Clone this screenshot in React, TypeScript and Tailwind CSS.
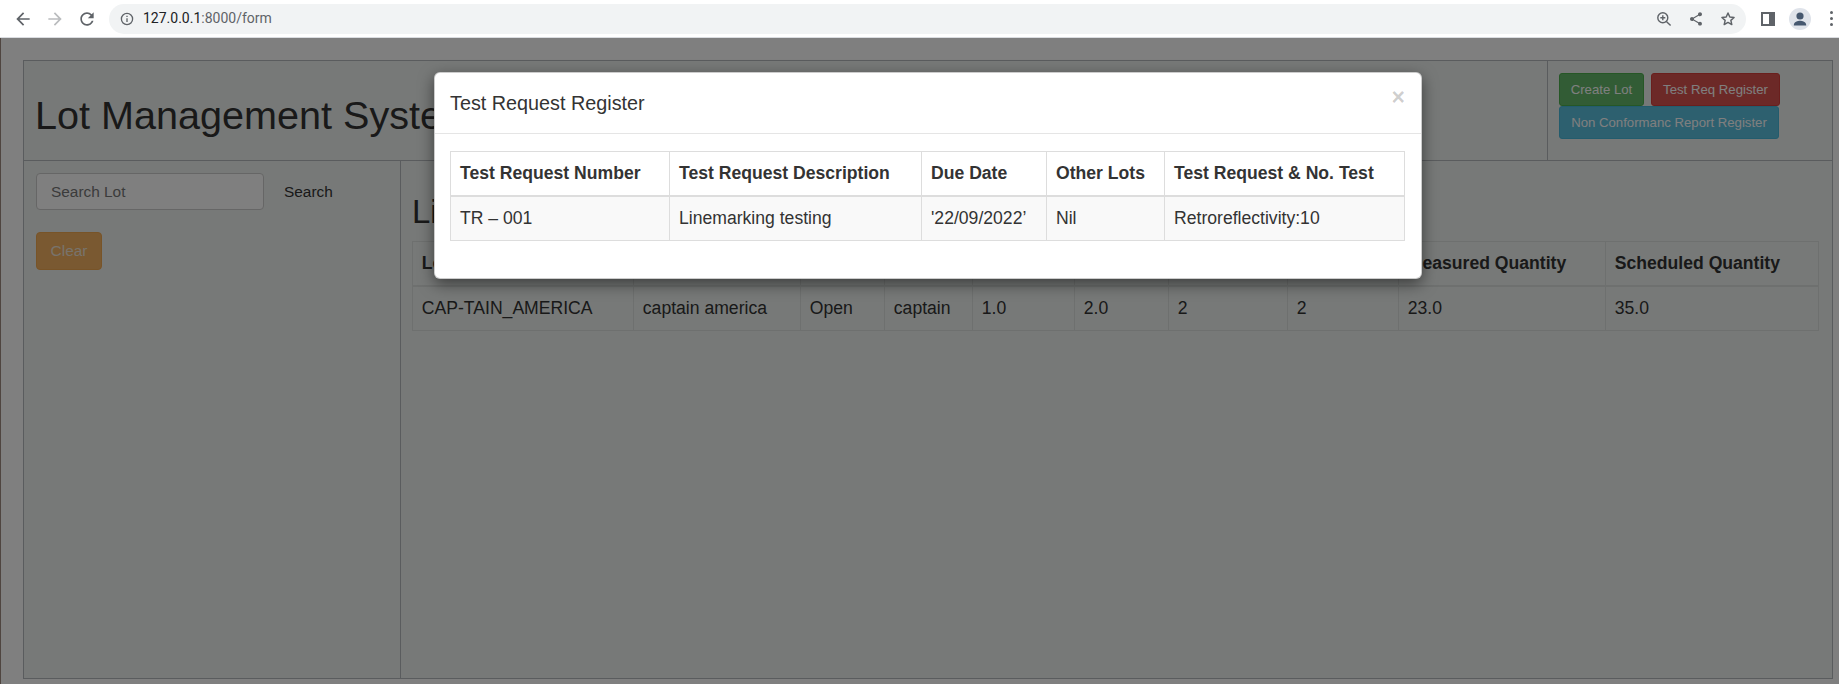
const FONT = { fontFamily: '"Liberation Sans", Arial, sans-serif' };

function Glyph({ d, className, fill = "#5f6368" }: { d: string; className: string; fill?: string }) {
  return (
    <svg viewBox="0 0 24 24" className={className} fill={fill}>
      <path d={d} />
    </svg>
  );
}

const ARROW = "M20 11H7.83l5.59-5.59L12 4l-8 8 8 8 1.41-1.41L7.83 13H20v-2z";
const RELOAD =
  "M17.65 6.35C16.2 4.9 14.21 4 12 4c-4.42 0-7.99 3.58-7.99 8s3.57 8 7.99 8c3.73 0 6.84-2.55 7.73-6h-2.08c-.82 2.33-3.04 4-5.65 4-3.31 0-6-2.69-6-6s2.69-6 6-6c1.66 0 3.14.69 4.22 1.78L13 11h7V4l-2.35 2.35z";
const SHARE =
  "M18 16.08c-.76 0-1.44.3-1.96.77L8.91 12.7c.05-.23.09-.46.09-.7s-.04-.47-.09-.7l7.05-4.11c.54.5 1.25.81 2.04.81 1.66 0 3-1.34 3-3s-1.34-3-3-3-3 1.34-3 3c0 .24.04.47.09.7L8.04 9.81C7.5 9.31 6.79 9 6 9c-1.66 0-3 1.34-3 3s1.34 3 3 3c.79 0 1.5-.31 2.04-.81l7.12 4.16c-.05.21-.08.43-.08.65 0 1.61 1.31 2.92 2.92 2.92 1.61 0 2.92-1.31 2.92-2.92s-1.31-2.92-2.92-2.92z";

function BrowserBar() {
  return (
    <div className="h-[38px] shrink-0 bg-white border-b border-[#dadce0] flex items-center pl-[13px] pr-0">
      <Glyph d={ARROW} className="w-5 h-5 shrink-0" />
      <Glyph d={ARROW} fill="#babcbe" className="w-5 h-5 shrink-0 ml-[12px] rotate-180" />
      <Glyph d={RELOAD} className="w-5 h-5 shrink-0 ml-[12px]" />
      <div className="ml-[12px] w-[1637px] h-[30px] rounded-full bg-[#f1f3f4] flex items-center pl-[11px] pr-[10px]">
        <svg viewBox="0 0 16 16" className="w-[14px] h-[14px] shrink-0" fill="none" stroke="#5f6368" strokeWidth="1.5">
          <circle cx="8" cy="8" r="6.4" />
          <path d="M8 7v4.4M8 4.4v1.4" />
        </svg>
        <span className="ml-[9px] text-[14px] text-[#202124]" style={{ fontFamily: 'Roboto, "Noto Sans", sans-serif' }}>
          127.0.0.1<span className="text-[#5f6368]">:8000/form</span>
        </span>
        <div className="ml-auto flex items-center gap-[16px]">
          <svg viewBox="0 0 16 16" className="w-[16px] h-[16px]" fill="none" stroke="#5f6368" strokeWidth="1.4">
            <circle cx="6.8" cy="6.8" r="5" />
            <path d="M10.4 10.4l4.2 4.2M6.8 4.3v5M4.3 6.8h5" />
          </svg>
          <Glyph d={SHARE} className="w-[16px] h-[16px]" />
          <svg viewBox="0 0 24 24" className="w-[16px] h-[16px]" fill="none" stroke="#5f6368" strokeWidth="2.2" strokeLinejoin="round">
            <path d="M12 3l2.7 6 6.4.7-4.8 4.3 1.4 6.4L12 17.1l-5.7 3.3 1.4-6.4-4.8-4.3 6.4-.7z" />
          </svg>
        </div>
      </div>
      <div className="ml-[15px] w-[14px] h-[14px] shrink-0 border-2 border-[#5f6368] border-r-[6px]" />
      <div className="ml-[14px] w-[22px] h-[22px] shrink-0 rounded-full bg-[#dfe3ea] overflow-hidden">
        <svg viewBox="0 0 22 22" className="w-full h-full" fill="#46586f">
          <circle cx="11" cy="8" r="3.6" />
          <path d="M4.8 17c0-2.9 4-4.2 6.2-4.2s6.2 1.3 6.2 4.2v.6H4.8z" />
        </svg>
      </div>
      <div className="ml-[19px] w-[3px] flex flex-col gap-[3px] shrink-0">
        <span className="w-[3px] h-[3px] rounded-full bg-[#5f6368]" />
        <span className="w-[3px] h-[3px] rounded-full bg-[#5f6368]" />
        <span className="w-[3px] h-[3px] rounded-full bg-[#5f6368]" />
      </div>
    </div>
  );
}

function LotTable() {
  return (
    <table className="table-fixed border-collapse w-[1407px] text-[17.6px] text-[#333]">
      <thead>
        <tr className="h-[44px] text-left">
          <th className="w-[221px] border border-[#dde0de] px-[8.8px] font-bold">Lot</th>
          <th className="w-[167px] border border-[#dde0de]"></th>
          <th className="w-[84px] border border-[#dde0de]"></th>
          <th className="w-[88px] border border-[#dde0de]"></th>
          <th className="w-[102px] border border-[#dde0de]"></th>
          <th className="w-[94px] border border-[#dde0de]"></th>
          <th className="w-[119px] border border-[#dde0de]"></th>
          <th className="w-[111px] border border-[#dde0de]"></th>
          <th className="w-[207px] border border-[#dde0de] px-[8.8px] font-bold whitespace-nowrap">Measured Quantity</th>
          <th className="border border-[#dde0de] px-[8.8px] font-bold whitespace-nowrap">Scheduled Quantity</th>
        </tr>
      </thead>
      <tbody>
        <tr className="h-[45px] border-t-2 border-[#dde0de]">
          <td className="border border-[#dde0de] px-[8.8px]">CAP-TAIN_AMERICA</td>
          <td className="border border-[#dde0de] px-[8.8px]">captain america</td>
          <td className="border border-[#dde0de] px-[8.8px]">Open</td>
          <td className="border border-[#dde0de] px-[8.8px]">captain</td>
          <td className="border border-[#dde0de] px-[8.8px]">1.0</td>
          <td className="border border-[#dde0de] px-[8.8px]">2.0</td>
          <td className="border border-[#dde0de] px-[8.8px]">2</td>
          <td className="border border-[#dde0de] px-[8.8px]">2</td>
          <td className="border border-[#dde0de] px-[8.8px]">23.0</td>
          <td className="border border-[#dde0de] px-[8.8px]">35.0</td>
        </tr>
      </tbody>
    </table>
  );
}

function Modal() {
  return (
    <div className="absolute inset-0 bg-black/50">
      <div className="mt-[34px] ml-[433px] w-[988px] h-[207px] bg-white rounded-[6px] border border-black/20 shadow-[0_5px_15px_rgba(0,0,0,0.5)]">
        <div className="h-[61px] border-b border-[#e5e5e5] flex items-start justify-between pl-[15px] pr-[16px]">
          <h4 className="mt-[17px] text-[19.8px] leading-[26px] text-[#333]">Test Request Register</h4>
          <span className="mt-[8px] text-[23px] font-bold leading-[32px] text-black/20">×</span>
        </div>
        <div className="pl-[15px] pt-[17px]">
          <table className="table-fixed border-collapse w-[955px] text-[17.6px] text-[#333]">
            <thead>
              <tr className="h-[44px] text-left">
                <th className="w-[219px] border border-[#ddd] px-[9px] font-bold whitespace-nowrap">Test Request Number</th>
                <th className="w-[252px] border border-[#ddd] px-[9px] font-bold whitespace-nowrap">Test Request Description</th>
                <th className="w-[125px] border border-[#ddd] px-[9px] font-bold whitespace-nowrap">Due Date</th>
                <th className="w-[118px] border border-[#ddd] px-[9px] font-bold whitespace-nowrap">Other Lots</th>
                <th className="border border-[#ddd] px-[9px] font-bold whitespace-nowrap">Test Request &amp; No. Test</th>
              </tr>
            </thead>
            <tbody>
              <tr className="h-[45px] bg-[#f9f9f9] border-t-2 border-[#ddd]">
                <td className="border border-[#ddd] px-[9px]">TR – 001</td>
                <td className="border border-[#ddd] px-[9px]">Linemarking testing</td>
                <td className="border border-[#ddd] px-[9px]">'22/09/2022’</td>
                <td className="border border-[#ddd] px-[9px]">Nil</td>
                <td className="border border-[#ddd] px-[9px]">Retroreflectivity:10</td>
              </tr>
            </tbody>
          </table>
        </div>
      </div>
    </div>
  );
}

export default function App() {
  return (
    <div className="h-[684px] w-[1839px] overflow-hidden flex flex-col bg-white" style={FONT}>
      <BrowserBar />
      <div className="relative flex-1 min-h-0 bg-white border-l border-[#4f4540] pt-[22px] pl-[22px]">
        <div className="w-[1810px] h-[619px] bg-[#eef2f0] border border-[#b5b9bd] flex flex-col text-[#333]">
          <div className="h-[100px] shrink-0 border-b border-[#b5b9bd] flex">
            <div className="flex-1 flex items-center pl-[11px] pt-[9px]">
              <h1 className="text-[39.6px] leading-[44px] text-[#333] whitespace-nowrap">Lot Management System</h1>
            </div>
            <div className="w-[285px] shrink-0 border-l border-[#b5b9bd] pl-[11px] pt-[12px] text-[13.2px] leading-[18px] text-white">
              <div className="flex gap-[7px]">
                <button className="h-[33px] w-[85px] rounded-[3px] bg-[#65b96b] border border-[#4cae4c]">Create Lot</button>
                <button className="h-[33px] w-[129px] rounded-[3px] bg-[#d9534f] border border-[#d43f3a]">Test Req Register</button>
              </div>
              <button className="h-[33px] w-[220px] rounded-[3px] bg-[#5bc0de] border border-[#46b8da]">Non Conformanc Report Register</button>
            </div>
          </div>
          <div className="flex-1 min-h-0 flex">
            <div className="w-[377px] shrink-0 border-r border-[#b5b9bd] pl-[12px] pt-[12px]">
              <div className="flex items-center">
                <input
                  readOnly
                  placeholder="Search Lot"
                  className="w-[228px] h-[37px] rounded-[4px] bg-white border border-[#ccc] px-[14px] text-[15.4px] placeholder:text-[#777] outline-none"
                />
                <span className="ml-[20px] text-[15.4px] text-[#333]">Search</span>
              </div>
              <button className="mt-[22px] w-[66px] h-[38px] rounded-[4px] bg-[#f5b262] border border-[#f0a850] text-[#f0e6d8] text-[15.4px]">Clear</button>
            </div>
            <div className="flex-1 pl-[11px] pt-[33px]">
              <h2 className="text-[33px] leading-[36px] h-[47px] text-[#333] whitespace-nowrap">Li</h2>
              <LotTable />
            </div>
          </div>
        </div>
        <Modal />
      </div>
    </div>
  );
}
